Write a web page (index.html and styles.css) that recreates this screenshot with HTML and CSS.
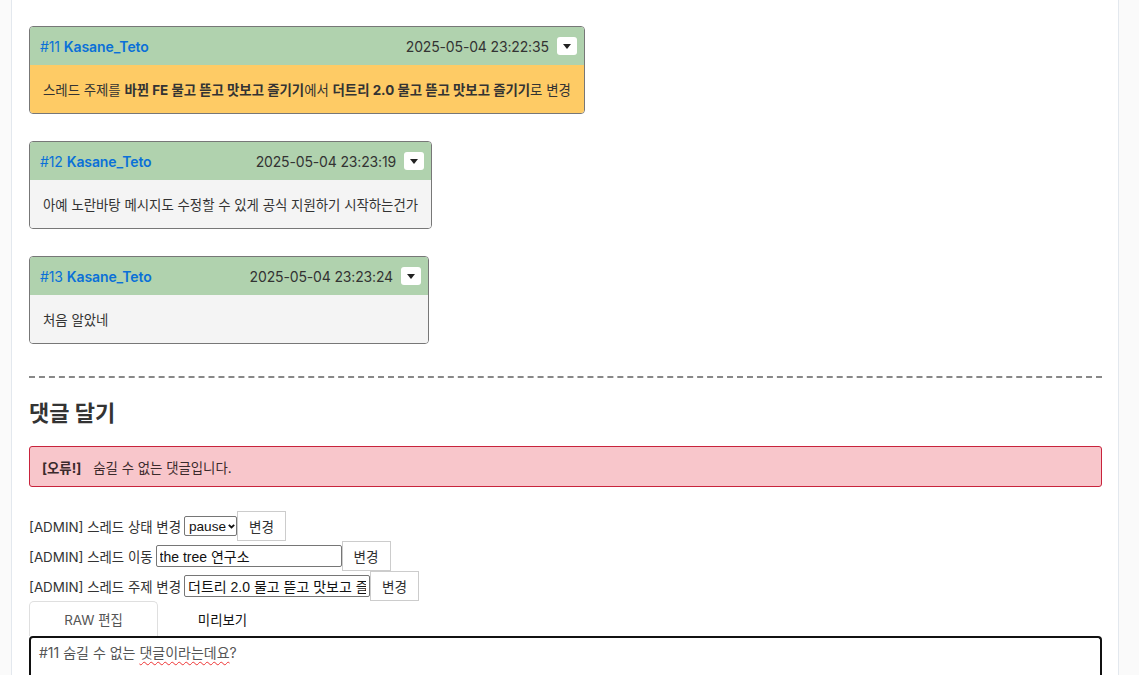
FILE: index.html
```html
<!DOCTYPE html>
<html lang="ko">
<head>
<meta charset="utf-8">
<title>댓글</title>
<link rel="stylesheet" href="styles.css">
</head>
<body>
<div class="panel">
  <div class="res">
    <div class="res-head">
      <div class="who"><span class="num">#11</span> <b>Kasane_Teto</b></div>
      <div class="meta"><span class="date">2025-05-04 23:22:35</span><span class="drop"><svg width="8" height="5" viewBox="0 0 8 5"><path d="M0 0h8L4 5z" fill="#222"/></svg></span></div>
    </div>
    <div class="res-body status"><span>스레드 주제를 <b>바뀐 FE 물고 뜯고 맛보고 즐기기</b>에서 <b>더트리 2.0 물고 뜯고 맛보고 즐기기</b>로 변경</span></div>
  </div>

  <div class="res">
    <div class="res-head">
      <div class="who"><span class="num">#12</span> <b>Kasane_Teto</b></div>
      <div class="meta"><span class="date">2025-05-04 23:23:19</span><span class="drop"><svg width="8" height="5" viewBox="0 0 8 5"><path d="M0 0h8L4 5z" fill="#222"/></svg></span></div>
    </div>
    <div class="res-body"><span>아예 노란바탕 메시지도 수정할 수 있게 공식 지원하기 시작하는건가</span></div>
  </div>

  <div class="res">
    <div class="res-head">
      <div class="who"><span class="num">#13</span> <b>Kasane_Teto</b></div>
      <div class="meta"><span class="date">2025-05-04 23:23:24</span><span class="drop"><svg width="8" height="5" viewBox="0 0 8 5"><path d="M0 0h8L4 5z" fill="#222"/></svg></span></div>
    </div>
    <div class="res-body"><span>처음 알았네</span></div>
  </div>

  <hr class="sep">

  <h2 class="title">댓글 달기</h2>

  <div class="alert"><b>[오류!]</b><span class="alert-msg">숨길 수 없는 댓글입니다.</span></div>

  <div class="admin">
    <div class="arow"><span class="lbl">[ADMIN] 스레드 상태 변경</span><span class="selwrap"><select class="sel"><option>pause</option></select><svg class="chev" width="7" height="5" viewBox="0 0 7 5"><path d="M0.8 0.8l2.7 2.7L6.2 0.8" fill="none" stroke="#111" stroke-width="1.8"/></svg></span><button class="btn">변경</button></div>
    <div class="arow"><span class="lbl">[ADMIN] 스레드 이동</span><input class="inp" value="the tree 연구소"><button class="btn">변경</button></div>
    <div class="arow"><span class="lbl">[ADMIN] 스레드 주제 변경</span><input class="inp" value="더트리 2.0 물고 뜯고 맛보고 즐기기"><button class="btn">변경</button></div>
  </div>

  <div class="tabs">
    <div class="tab tab-on">RAW 편집</div>
    <div class="tab">미리보기</div>
  </div>
  <div class="editor">#11 숨길 수 없는 <span class="typo">댓글이라는데요</span>?</div>
</div>
</body>
</html>
```

FILE: styles.css
```css
html, body {
  margin: 0;
  padding: 0;
  background: #fafafa;
  height: 100%;
  overflow: hidden;
}
body {
  font-family: Inter, "Noto Sans CJK KR", sans-serif;
  color: #373a3c;
}
.panel {
  margin-left: 11px;
  width: 1073px;
  min-height: 100%;
  background: #fff;
  border-left: 1px solid #e3e8ee;
  border-right: 1px solid #e3e8ee;
  padding: 26px 16px 0 17px;
  display: flex;
  flex-direction: column;
  align-items: flex-start;
}
.res {
  border: 1px solid #777;
  border-radius: 4px;
  overflow: hidden;
  margin-bottom: 27px;
  min-width: 400px;
  box-sizing: border-box;
}
.res-head {
  background: #b0d2ae;
  height: 38px;
  display: flex;
  align-items: center;
  justify-content: space-between;
  padding: 0 7px 0 10px;
  font-size: 14px;
  gap: 20px;
}
.who { color: #0a70d8; letter-spacing: -0.1px; }
.who b { font-weight: 600; }
.meta { display: flex; align-items: center; gap: 8px; color: #333; letter-spacing: -0.15px; }
.drop {
  width: 20px;
  height: 18px;
  background: #fff;
  border-radius: 3px;
  display: flex;
  align-items: center;
  justify-content: center;
}
.res-body {
  background: #f4f4f4;
  padding: 0 13px;
  height: 48px;
  display: flex;
  align-items: center;
  font-size: 13.4px;
  color: #333;
  white-space: nowrap;
}
.res-body b { font-weight: 700; }
.status { background: #fecb65; }
.sep {
  align-self: stretch;
  border: 0;
  border-top: 2px dashed #888;
  margin: 5px 0 0;
}
.title {
  font-size: 22px;
  font-weight: 700;
  color: #333;
  margin: 20px 0 18px;
  line-height: 30px;
}
.alert {
  align-self: stretch;
  background: #f8c6cb;
  border: 1px solid #c8233c;
  border-radius: 3px;
  height: 39px;
  display: flex;
  align-items: center;
  padding: 0 12px;
  font-size: 13.4px;
  color: #3a2a2c;
}
.alert b { font-weight: 700; margin-right: 12px; }
.admin {
  margin-top: 24px;
  font-size: 13.4px;
  color: #333;
}
.arow {
  height: 30px;
  display: flex;
  align-items: center;
}
.lbl { margin-right: 3px; }
.selwrap {
  position: relative;
  display: inline-flex;
}
.sel {
  appearance: none;
  -webkit-appearance: none;
  font-family: "Liberation Sans", "Noto Sans CJK KR", sans-serif;
  font-size: 13.6px;
  height: 20px;
  width: 53px;
  padding: 0 0 0 4px;
  border: 1px solid #767676;
  border-radius: 2px;
  background: #fff;
  color: #111;
}
.chev {
  position: absolute;
  right: 2px;
  top: 8px;
}
.inp {
  font-family: "Liberation Sans", "Noto Sans CJK KR", sans-serif;
  font-size: 14px;
  width: 186px;
  height: 22px;
  box-sizing: border-box;
  padding: 0 3px;
  border: 1px solid #767676;
  border-radius: 2px;
  color: #111;
}
.btn {
  font-family: Inter, "Noto Sans CJK KR", sans-serif;
  font-size: 13.6px;
  height: 30px;
  width: 49px;
  padding: 0;
  background: #fff;
  border: 1px solid #ccc;
  color: #333;
}
.tabs {
  display: flex;
  height: 35px;
}
.tab {
  width: 127px;
  display: flex;
  align-items: center;
  justify-content: center;
  font-size: 13.4px;
  color: #111;
  border: 1px solid transparent;
  border-bottom: 0;
  border-radius: 5px 5px 0 0;
}
.tab-on { border-color: #dfdfdf; color: #555; }
.editor {
  align-self: stretch;
  border: 2px solid #111;
  border-bottom: 0;
  border-radius: 4px 4px 0 0;
  height: 60px;
  padding: 4px 8px;
  font-size: 14px;
  color: #555;
}
.typo {
  text-decoration: underline wavy #e33;
  text-underline-offset: 3px;
  text-decoration-thickness: 1px;
}
```
